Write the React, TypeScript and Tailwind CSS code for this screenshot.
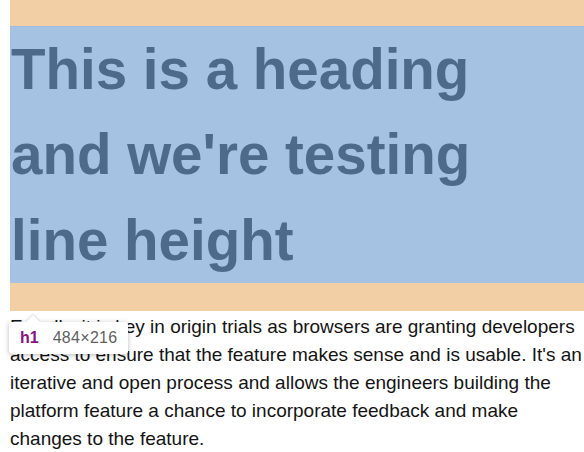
import React from 'react';

const paragraphLines = [
  'Equally, it is key in origin trials as browsers are granting developers',
  "access to ensure that the feature makes sense and is usable. It's an",
  'iterative and open process and allows the engineers building the',
  'platform feature a chance to incorporate feedback and make',
  'changes to the feature.',
];

const App = () => {
  return (
    <div className="relative h-[452px] w-[584px] overflow-hidden bg-white pl-[10px] font-['Liberation_Sans',Arial,sans-serif]">
      {/* margin box + content box of the inspected h1 */}
      <div className="bg-[#f3cfa5] pt-[27px] pb-[28px]">
        <h1 className="-mt-px whitespace-nowrap border-t border-[#9ebde1] bg-[#a5c2e2] pl-px text-[56.5px] font-bold leading-[85.33px] text-[#4e6a8b]">
          This is a heading
          <br />
          and we're testing
          <br />
          line height
        </h1>
      </div>

      <p className="mt-[2px] text-[19px] leading-[28px] text-[#141414]">
        {paragraphLines.map((line) => (
          <span key={line} className="block whitespace-nowrap">
            {line}
          </span>
        ))}
      </p>

      <div className="absolute left-[9px] top-[322px] flex h-[32px] w-[119px] items-center gap-[14px] rounded-[3px] bg-white pl-[11px] shadow-[0_1px_5px_rgba(0,0,0,0.28)]">
        <span className="absolute left-[19px] top-[-5px] h-[10px] w-[10px] rotate-45 bg-white shadow-[-1px_-1px_2px_rgba(0,0,0,0.12)]" />
        <span className="relative text-[16px] font-bold text-[#881280]">h1</span>
        <span className="relative text-[16px] tracking-[0.3px] text-[#5f5f5f]">484×216</span>
      </div>
    </div>
  );
};

export default App;
